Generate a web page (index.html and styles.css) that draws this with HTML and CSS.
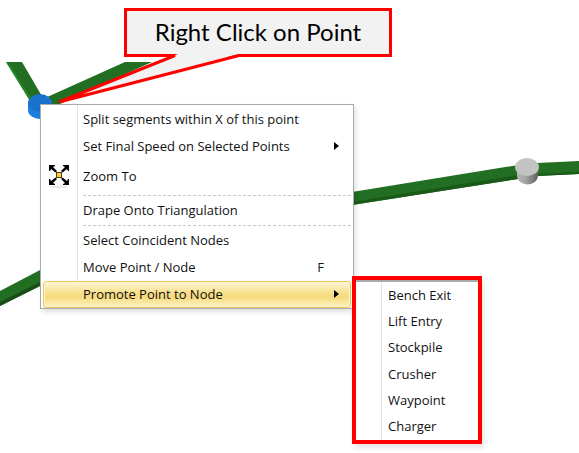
FILE: index.html
```html
<!DOCTYPE html>
<html lang="en">
<head>
    <meta charset="UTF-8">
    <title>Right Click on Point</title>
    <link rel="stylesheet" href="styles.css">
</head>
<body>
<main class="scene">
    <!-- road segments and nodes -->
    <svg class="roads" aria-hidden="true">
        <defs>
            <linearGradient id="silver">
                <stop offset="0" stop-color="#b5b5b5"/>
                <stop offset="0.35" stop-color="#a9a9a9"/>
                <stop offset="1" stop-color="#606060"/>
            </linearGradient>
        </defs>
        <path fill="#226e22" d="M6 62H22L43 98L33 106Z"/>
        <path fill="#268a26" d="M6 62L8 62L34 103L31 102Z"/>
        <path fill="#226e22" d="M125 62H152L60 104H45V98Z"/>
        <path fill="#226e22" d="M0 291L42 269V285L0 306Z"/>
        <path fill="#174f17" d="M0 302L42 281V285L0 306Z"/>
        <path fill="#226e22" d="M352 192L518 165V179L352 205Z"/>
        <path fill="#195a19" d="M352 202L518 175V179L352 205Z"/>
        <path fill="#226e22" d="M537 163L579 161L900 145V158L579 174L537 176Z"/>
        <path fill="#195a19" d="M537 174L579 172L900 156V158L579 174L537 176Z"/>
        <path fill="#1c7fe0" d="M28 103V110A12 9 0 0 0 52 110V103Z"/>
        <ellipse fill="#1a72cc" cx="40" cy="103" rx="12" ry="9"/>
        <path fill="url(#silver)" d="M517 168V176A10 8 0 0 0 538 176V168Z"/>
        <ellipse fill="#c3c3c3" cx="527" cy="167" rx="12" ry="9"/>
    </svg>

    <div class="callout">
        <span class="callout-text">Right Click on Point</span>
        <svg class="callout-tail" width="200" height="60" aria-hidden="true">
            <path fill="#f2f2f2" d="M51 2V6L-66 53L112 6V2Z"/>
            <path fill="none" stroke="#f00" stroke-width="3" stroke-linejoin="bevel" d="M44 7.500H48L-68 54L112 7.500H118"/>
        </svg>
    </div>

    <div class="menu main-menu" role="menu">
        <button class="item" role="menuitem">Split segments within X of this point</button>
        <button class="item" role="menuitem">Set Final Speed on Selected Points<span class="arrow"></span></button>
        <button class="item tall" role="menuitem">
            <svg class="icon" width="22" height="26" viewBox="0 0 22 26" aria-hidden="true">
                <ellipse cx="11" cy="24" rx="9" ry="1.500" fill="#e9e9e9"/>
                <path d="M1 2H7V3L5 4L9 8L7.500 9.500L3 6L2 8H1ZM21 2H15V3L17 4L13 8L14.500 9.500L19 6L20 8H21ZM1 22H7V21L5 20L9 16L7.500 14.500L3 18L2 16H1ZM21 22H15V21L17 20L13 16L14.500 14.500L19 18L20 16H21Z"/>
                <rect x="8.500" y="9.500" width="5" height="5" fill="#fc3" stroke="#4a3c10"/>
            </svg>
            Zoom To
        </button>
        <div class="separator" role="separator"></div>
        <button class="item" role="menuitem">Drape Onto Triangulation</button>
        <div class="separator" role="separator"></div>
        <button class="item" role="menuitem">Select Coincident Nodes</button>
        <button class="item" role="menuitem">Move Point / Node<span class="key">F</span></button>
        <button class="item active" role="menuitem">Promote Point to Node<span class="arrow"></span></button>
    </div>

    <div class="menu sub-menu" role="menu">
        <button class="item" role="menuitem">Bench Exit</button>
        <button class="item" role="menuitem">Lift Entry</button>
        <button class="item" role="menuitem">Stockpile</button>
        <button class="item" role="menuitem">Crusher</button>
        <button class="item" role="menuitem">Waypoint</button>
        <button class="item" role="menuitem">Charger</button>
    </div>
</main>
</body>
</html>
```
FILE: styles.css
```css
* {
    box-sizing: border-box;
}

body {
    margin: 0;
    background-color: white;
    color: #111;
    font-family: "Open Sans", "Noto Sans", sans-serif;
}

.scene {
    position: relative;
    min-height: 100vh;
    overflow: hidden;
}

.roads {
    position: absolute;
    top: 0;
    left: 0;
    width: 100%;
    height: 100%;
}

.callout {
    position: absolute;
    top: 8px;
    left: 124px;
    width: 268px;
    padding: 6px 0 7px;
    border: 3px solid red;
    background-color: #f2f2f2;
    color: black;
    font-family: Lato, "Open Sans", sans-serif;
    font-size: 24px;
    line-height: 30px;
    text-align: center;
}

.callout-tail {
    position: absolute;
    top: 37px;
    left: 0;
    overflow: visible;
}

.menu {
    position: absolute;
    display: flex;
    flex-direction: column;
    background: linear-gradient(#e2e3e3, #e2e3e3) 36px 0 / 1px 100% no-repeat white;
}

.main-menu {
    top: 104px;
    left: 40px;
    width: 314px;
    padding: 1px 2px 0;
    border: 1px solid #a7abb0;
    box-shadow: 2px 3px 5px rgba(0, 0, 0, 0.12);
}

.sub-menu {
    top: 276px;
    left: 352px;
    width: 130px;
    height: 168px;
    padding-top: 3px;
    border: 4px solid red;
    background-position: 25px 0;
    box-shadow: inset 0 2px #a7abb0, 2px 4px 5px rgba(0, 0, 0, 0.1);
}

.item {
    position: relative;
    display: flex;
    align-items: center;
    height: 27px;
    padding: 0 11px 2px 39px;
    border: 1px solid transparent;
    background: none;
    color: inherit;
    font-family: inherit;
    font-size: 13px;
    line-height: 18px;
    text-align: left;
    white-space: nowrap;
}

.sub-menu .item {
    flex: 1;
    padding-left: 31px;
}

.tall {
    height: 34px;
}

.active {
    border-color: #efc85c;
    border-radius: 3px;
    background: linear-gradient(#fdf6dc, #f8e28f 40%, #f6da7b 60%, #fdf3c4);
    box-shadow: inset 0 0 0 1px #fff3cd;
}

.icon {
    position: absolute;
    left: 4px;
}

.arrow {
    margin-left: auto;
    border: 4px solid transparent;
    border-left: 5px solid black;
    border-right: 0;
}

.key {
    margin-left: auto;
    padding-right: 15px;
}

.separator {
    height: 3px;
    margin-left: 40px;
    background: repeating-linear-gradient(90deg, #c8c8c8 0 3px, white 3px 5px) 0 1px / 100% 1px no-repeat;
}
```
